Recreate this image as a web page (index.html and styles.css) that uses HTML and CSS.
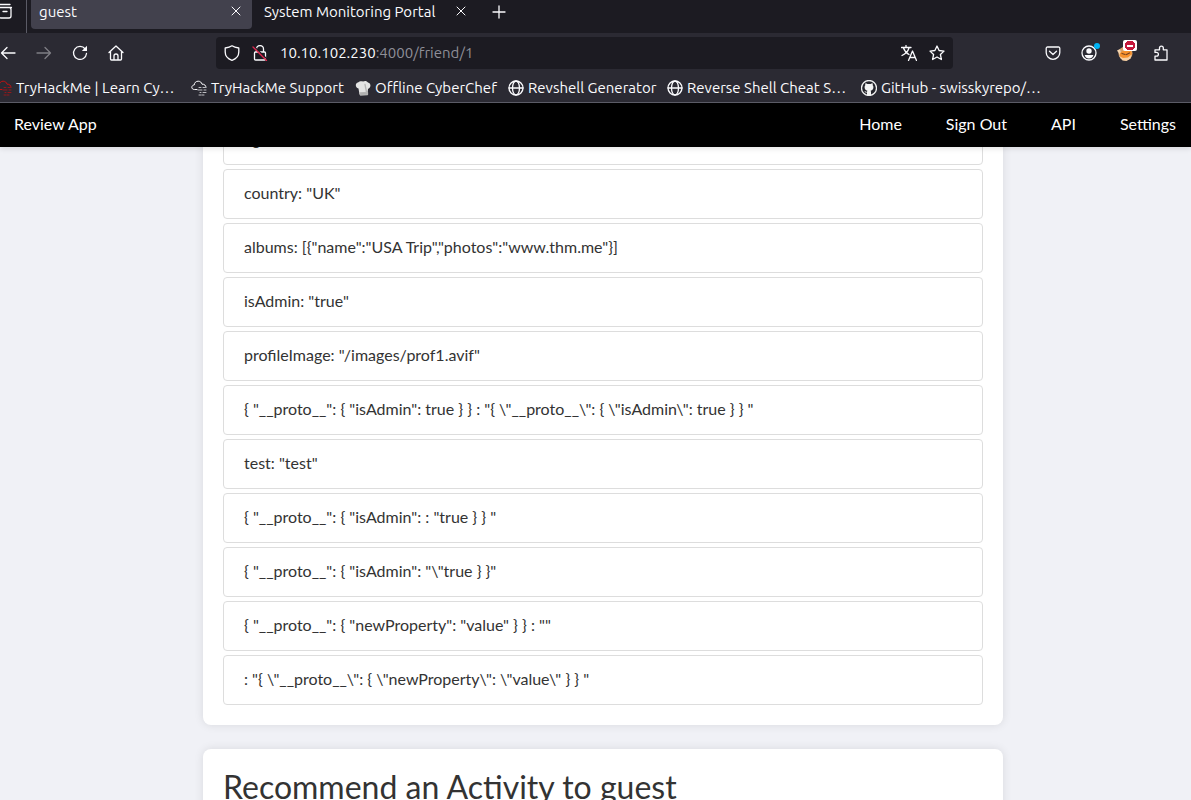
FILE: index.html
```html
<!DOCTYPE html>
<html lang="en">
<head>
<meta charset="utf-8">
<title>guest</title>
<link rel="stylesheet" href="styles.css">
</head>
<body>
<header class="chrome">
  <div class="tabs">
    <button class="icon-btn history" aria-label="Tab overview"><svg width="16" height="18" viewBox="0 0 16 18"><path d="M3 2.500h10M1.500 5.500h13M2 7.500v6.500a2 2 0 0 0 2 2h8a2 2 0 0 0 2-2V7.500a2 2 0 0 0-2-2M6 9.500h4"/></svg></button>
    <div class="tab active"><span>guest</span><button class="icon-btn close" aria-label="Close guest"><svg width="10" height="10" viewBox="0 0 10 10"><path d="M1 1l8 8M9 1L1 9"/></svg></button></div>
    <div class="tab"><span>System Monitoring Portal</span><button class="icon-btn close" aria-label="Close System Monitoring Portal"><svg width="10" height="10" viewBox="0 0 10 10"><path d="M1 1l8 8M9 1L1 9"/></svg></button></div>
    <button class="icon-btn add" aria-label="New tab"><svg width="14" height="14" viewBox="0 0 14 14"><path d="M7 1v12M1 7h12"/></svg></button>
  </div>
  <div class="toolbar">
    <div class="nav-buttons">
      <button class="icon-btn" aria-label="Back"><svg viewBox="0 0 16 16"><path d="M15 8H1.500M7 2.500L1.500 8L7 13.500"/></svg></button>
      <button class="icon-btn dim" aria-label="Forward"><svg viewBox="0 0 16 16"><path d="M1 8h13.500M9 2.500L14.500 8L9 13.500"/></svg></button>
      <button class="icon-btn" aria-label="Reload"><svg viewBox="0 0 16 16"><path d="M13.200 4A6.500 6.500 0 1 0 14.500 8.500"/><path class="solid" d="M15 .8V6h-5.200z"/></svg></button>
      <button class="icon-btn" aria-label="Home"><svg viewBox="0 0 16 16"><path d="M1 7.500L8 1l7 6.500M2.500 6.500V14a1 1 0 0 0 1 1h9a1 1 0 0 0 1-1V6.500M6 15v-4a2 2 0 0 1 4 0v4"/></svg></button>
    </div>
    <div class="urlbar">
      <svg viewBox="0 0 16 16"><path d="M8 .8C6 2.200 3.800 2.700 1.200 3v4c0 4 2.500 6.800 6.800 8.300C12.300 13.800 14.800 11 14.800 7V3C12.200 2.700 10 2.200 8 .8z"/></svg>
      <svg viewBox="0 0 16 16"><path d="M4.500 7V4a3.500 3.500 0 0 1 7 0v3M3.500 7h9a1 1 0 0 1 1 1v6a1 1 0 0 1-1 1h-9a1 1 0 0 1-1-1V8a1 1 0 0 1 1-1z"/><path class="slash-gap" d="M2 1.500L15.500 14.500"/><path class="slash" d="M1 2L14.500 15.500"/></svg>
      <div class="address">10.10.102.230<span>:4000/friend/1</span></div>
      <button class="icon-btn" aria-label="Translate"><svg viewBox="0 0 16 16"><path d="M.5 2.500h9.500M5 .5v2M2.500 3C3.500 6 6 8.500 8 9.500M8 3C7 6.500 4 9 1 10.500M7.500 15.500L11.500 6l4 9.500M9 12.500h5"/></svg></button>
      <button class="icon-btn" aria-label="Bookmark"><svg viewBox="0 0 16 16"><path d="M8 1l2.100 4.500 4.900.6-3.600 3.400 1 5L8 12l-4.400 2.500 1-5L1 6.100l4.900-.6z"/></svg></button>
    </div>
    <div class="actions">
      <button class="icon-btn" aria-label="Save to Pocket"><svg viewBox="0 0 16 16"><path d="M2.500 2h11a1.300 1.300 0 0 1 1.300 1.300V7.500a6.800 6.800 0 0 1-13.600 0V3.300A1.300 1.300 0 0 1 2.500 2zM4.500 6.300L8 9.500l3.500-3.200"/></svg></button>
      <button class="icon-btn" aria-label="Account"><svg viewBox="0 0 16 16"><circle cx="8" cy="8" r="7"/><circle class="solid" cx="8" cy="6" r="2.700"/><path class="solid" d="M3.700 10h8.600c0 2-2 3.400-4.300 3.400S3.700 12 3.700 10z"/></svg><i class="dot"></i></button>
      <button class="icon-btn" aria-label="FoxyProxy"><svg class="art" viewBox="0 0 16 16"><circle cx="8.500" cy="8.500" r="7" fill="#d9a26b"/><path d="M0 5.500l3-1.500 1 4-1 2z" fill="#f3d3ae"/><path d="M3 8l3-2 8 0 1 3-3 4-6 1-3-3z" fill="#f6922d"/><path d="M2 11l4 2 5-.5 3.500-3-1 4-4 2.500-4-.5z" fill="#f6d0a4"/><path d="M5 8.500l3 1M9.500 9.500l3-1.500" stroke="#7a4420"/></svg><i class="blocked"></i></button>
      <button class="icon-btn" aria-label="Extensions"><svg viewBox="0 0 16 16"><path d="M2 15V11.200h1.500a1.900 1.900 0 1 0 0-3.800H2V4.800h4.500V3a1.900 1.900 0 0 1 3.800 0v1.800H14V15z"/></svg></button>
    </div>
  </div>
  <nav class="bookmarks" aria-label="Bookmarks">
    <a href="#"><svg class="cloud red" viewBox="0 0 16 16"><path d="M6 9.500H3.500C1.500 9.500.8 8.300.8 7.300.8 6 2 5 3.200 5 3.500 2.500 5 1.200 7.200 1.200S10.500 2.500 11 4.200C13.500 4 15 5.500 15 7.500"/><path class="bits" d="M8 7.500h2m2 0h2M7 10h4m2 0h2M9 12.500h1m2 0h3M8 15h2m1 0h2"/></svg>TryHackMe | Learn Cy…</a>
    <a href="#"><svg class="cloud" viewBox="0 0 16 16"><path d="M6 9.500H3.500C1.500 9.500.8 8.300.8 7.300.8 6 2 5 3.200 5 3.500 2.500 5 1.200 7.200 1.200S10.500 2.500 11 4.200C13.500 4 15 5.500 15 7.500"/><path class="bits" d="M8 7.500h2m2 0h2M7 10h4m2 0h2M9 12.500h1m2 0h3M8 15h2m1 0h2"/></svg>TryHackMe Support</a>
    <a href="#"><svg class="art" viewBox="0 0 16 16"><path d="M3.500 8.500C0 8 0 3 3 2.500 4.500 1 6.500 1 8 1.500c2-1 4-.5 5 1 3 .5 3.500 5 0 6.500L12.500 14l-8 .5z" fill="#e4e4e4"/><path d="M5 13l7.500-.5v2l-7 .5zM10 4.500L11.500 12" fill="#aaa" stroke="#b5b5b5"/></svg>Offline CyberChef</a>
    <a href="#"><svg viewBox="0 0 16 16"><circle cx="8" cy="8" r="7"/><ellipse cx="8" cy="8" rx="3.500" ry="7"/><path d="M1 8h14"/></svg>Revshell Generator</a>
    <a href="#"><svg viewBox="0 0 16 16"><circle cx="8" cy="8" r="7"/><ellipse cx="8" cy="8" rx="3.500" ry="7"/><path d="M1 8h14"/></svg>Reverse Shell Cheat S…</a>
    <a href="#"><svg class="art" viewBox="0 0 16 16"><circle cx="8" cy="8" r="7.500" fill="#24242b" stroke="#eee"/><path d="M6 15v-2.500c-1.500.3-2-.5-2.600-1.300.9-.2 1.500 1 2.600.6l.4-1C4.500 10.300 3.600 9.200 3.600 7.200c0-.8.2-1.400.7-1.900-.2-.7-.1-1.500.1-2 .8 0 1.500.4 2 .8a7 7 0 0 1 3.200 0c.5-.4 1.200-.8 2-.8.2.5.3 1.300.1 2 .5.500.7 1.100.7 1.900 0 2-.9 3.100-2.800 3.600l.4 1V15z" fill="#f4f4f4"/></svg>GitHub - swisskyrepo/…</a>
  </nav>
</header>
<nav class="site-nav">
  <a href="#">Review App</a>
  <div class="links"><a href="#">Home</a><a href="#">Sign Out</a><a href="#">API</a><a href="#">Settings</a></div>
</nav>
<main class="page">
  <section class="card">
    <ul class="details">
      <li>age:</li>
      <li>country: "UK"</li>
      <li>albums: [{"name":"USA Trip","photos":"www.thm.me"}]</li>
      <li>isAdmin: "true"</li>
      <li>profileImage: "/images/prof1.avif"</li>
      <li>{ "__proto__": { "isAdmin": true } } : "{ \"__proto__\": { \"isAdmin\": true } } "</li>
      <li>test: "test"</li>
      <li>{ "__proto__": { "isAdmin": : "true } } "</li>
      <li>{ "__proto__": { "isAdmin": "\"true } }"</li>
      <li>{ "__proto__": { "newProperty": "value" } } : ""</li>
      <li>: "{ \"__proto__\": { \"newProperty\": \"value\" } } "</li>
    </ul>
  </section>
  <section class="card">
    <h2>Recommend an Activity to guest</h2>
  </section>
</main>
</body>
</html>
```
FILE: styles.css
```css
* { box-sizing: border-box; }
body {
  margin: 0;
  height: 100vh;
  display: flex;
  flex-direction: column;
  overflow: hidden;
  background: #f0f1f6;
  color: #333;
  font: 16px/24px Lato, sans-serif;
}
a { color: inherit; text-decoration: none; }

.chrome {
  flex: none;
  position: relative;
  z-index: 3;
  background: #2b2a33;
  border-bottom: 1px solid #5b5b66;
  color: #fbfbfe;
  font: 15px/20px Ubuntu, "Noto Sans", sans-serif;
}
.chrome svg {
  flex: none;
  display: block;
  fill: none;
  stroke: #fbfbfe;
  stroke-width: 1.3;
  stroke-linejoin: round;
  stroke-linecap: round;
}
.chrome svg:not([width]) { width: 16px; height: 16px; }
.chrome svg .solid { fill: #fbfbfe; stroke: none; }
.chrome svg.art { stroke: none; }
.icon-btn {
  position: relative;
  padding: 0;
  border: 0;
  background: none;
}

.tabs {
  display: flex;
  height: 33px;
  background: #1c1b22;
}
.history {
  width: 27px;
  border-right: 1px solid #5b5b66;
  margin-right: 4px;
}
.history svg { margin: -11px 0 0 -3px; }
.tab {
  display: flex;
  justify-content: space-between;
  width: 221px;
  height: 29px;
  padding: 2px 11px 0 8px;
  border-radius: 0 0 4px 4px;
}
.tab + .tab { margin-left: 4px; }
.tab.active { background: #42414d; }
.close { height: 18px; }
.close svg { stroke-width: 1; }
.add { height: 24px; margin-left: 15px; }

.toolbar {
  display: flex;
  align-items: center;
  height: 40px;
}
.nav-buttons {
  display: flex;
  gap: 20px;
  width: 216px;
}
.dim { opacity: .4; }
.urlbar {
  flex: 1;
  display: flex;
  align-items: center;
  gap: 12px;
  height: 32px;
  padding: 0 8px;
  border-radius: 4px;
  background: #1c1b22;
}
.address { flex: 1; }
.address span { color: #8f8f98; }
.chrome .slash-gap { stroke: #1c1b22; }
.chrome .slash { stroke: #e22850; }
.actions {
  display: flex;
  justify-content: flex-end;
  gap: 20px;
  width: 238px;
  padding-right: 22px;
}
.dot {
  position: absolute;
  top: -2px;
  right: -3px;
  width: 6px;
  height: 6px;
  border-radius: 50%;
  background: #00b3f4;
}
.blocked {
  position: absolute;
  top: -5px;
  right: -4px;
  width: 14px;
  height: 11px;
  border-radius: 2px;
  background: radial-gradient(circle, #c4183c 5px, #fff 5px);
}
.blocked::after {
  content: "";
  position: absolute;
  inset: 5px 4px 4px;
  background: #fff;
}

.bookmarks {
  display: grid;
  grid-template-columns: 195px 164px 153px 159px 194px 1fr;
  align-items: center;
  height: 29px;
  margin-left: -4px;
}
.bookmarks a {
  display: flex;
  align-items: center;
  gap: 4px;
  white-space: nowrap;
}
.chrome .cloud { stroke-width: 1; }
.chrome .cloud.red { stroke: #c11111; }
.cloud .bits { opacity: .7; }

.site-nav {
  flex: none;
  position: relative;
  z-index: 2;
  display: flex;
  justify-content: space-between;
  padding: 9px 15px 11px 14px;
  background: #000;
  color: #fff;
  box-shadow: 0 2px 5px rgba(0, 0, 0, .1);
}
.links { display: flex; gap: 44px; }

.page {
  display: flex;
  flex-direction: column;
  align-items: center;
  gap: 24px;
  margin-top: -52px;
  padding-left: 15px;
}
.card {
  width: 100%;
  max-width: 800px;
  padding: 20px;
  border-radius: 8px;
  background: #fff;
  box-shadow: 0 0 10px rgba(0, 0, 0, .1);
}
.details {
  display: grid;
  gap: 4px;
  margin: 0;
  padding: 0;
  list-style: none;
}
.details li {
  padding: 11px 20px 13px;
  border: 1px solid #ddd;
  border-radius: 4px;
}
h2 {
  margin: 0;
  font-size: 32px;
  font-weight: 400;
  line-height: 36px;
}
```
